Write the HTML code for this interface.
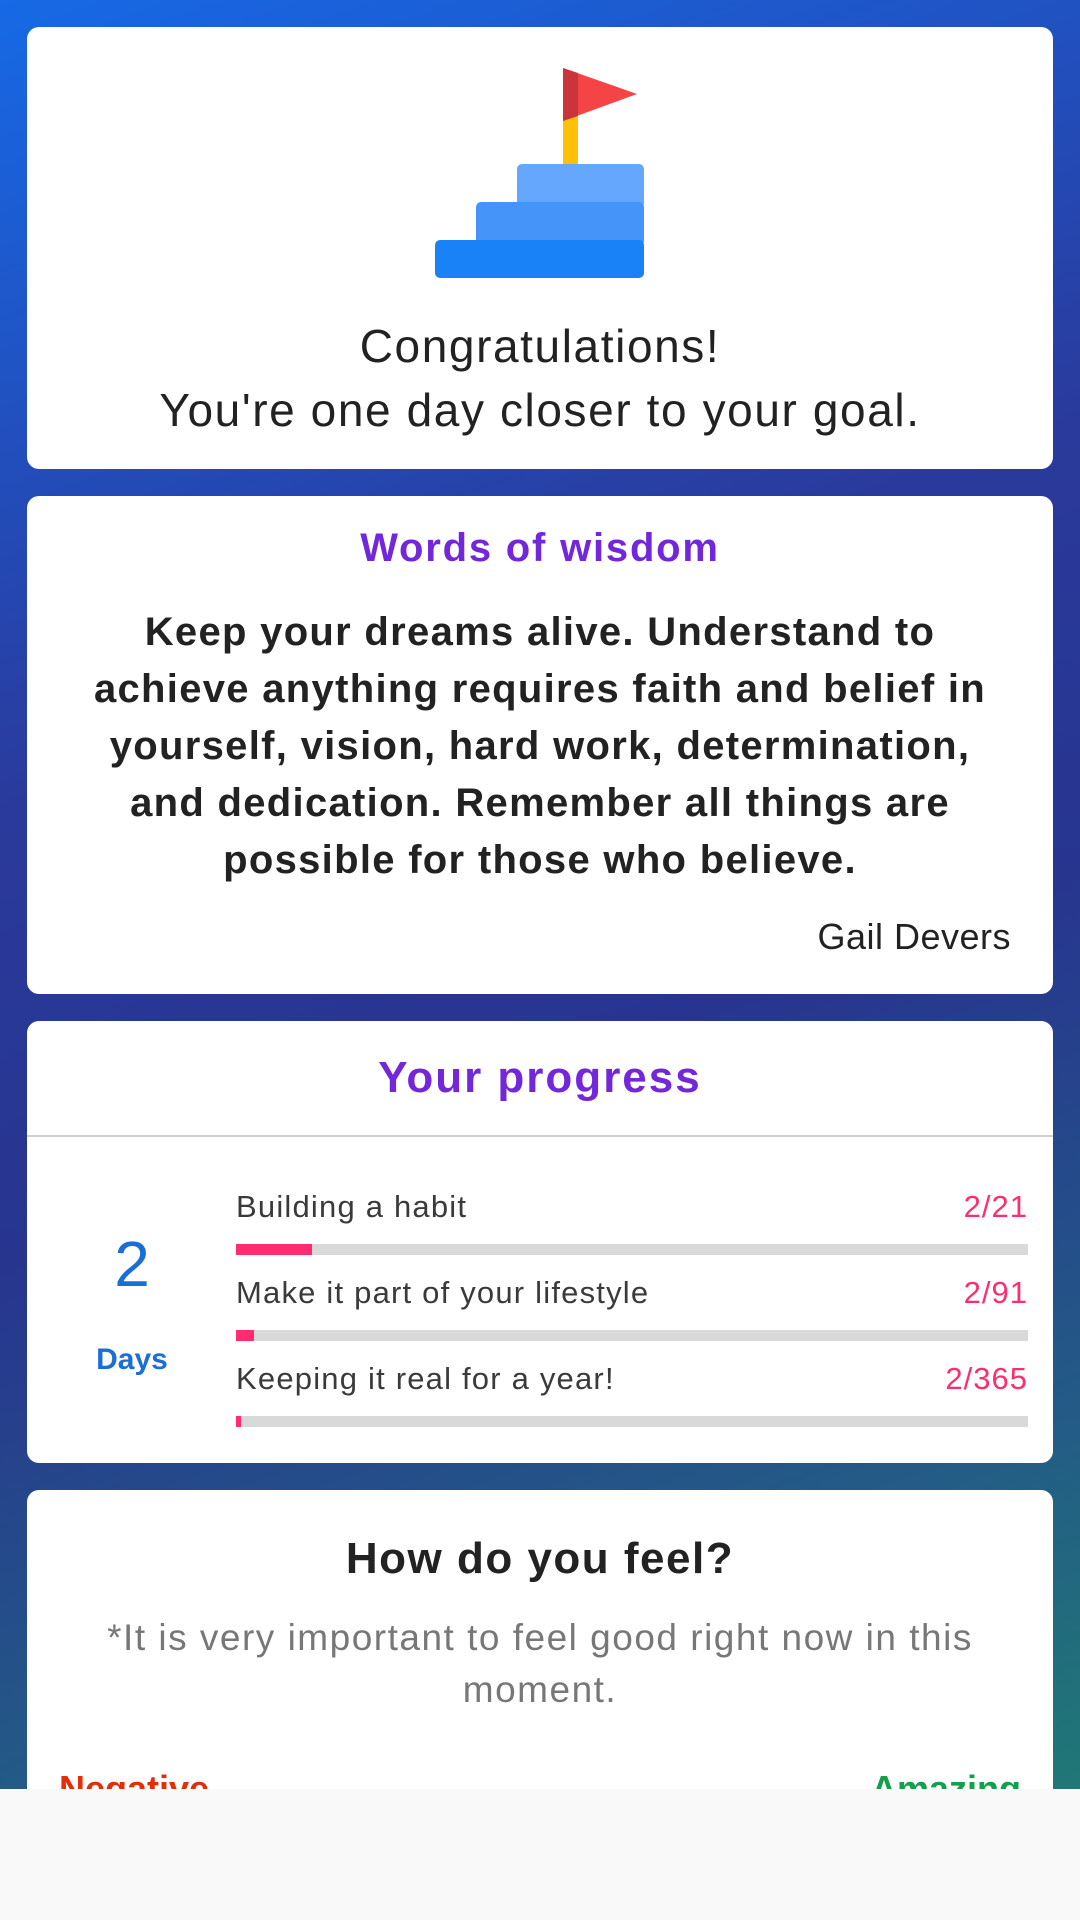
<!DOCTYPE html>
<html><head><meta charset="utf-8"><style>
*{margin:0;padding:0;box-sizing:border-box}
body{width:1080px;height:1920px;overflow:hidden;font-family:"Liberation Sans",sans-serif;position:relative;
background:linear-gradient(160deg,#1769e6 0%,#2a3a9c 35%,#27358f 55%,#235b86 78%,#1f8270 100%);}
.card{position:absolute;left:27px;width:1026px;background:#fff;border-radius:12px;}
.c{text-align:center}
.bar{position:absolute;left:209px;width:792px;height:11px;background:#d9d9d9}
.bar i{display:block;height:100%;background:#ff2d6f}
.lab{position:absolute;left:209px;font-size:31px;color:#3a3a3a;letter-spacing:1.2px}
.num{position:absolute;right:25px;font-size:31px;color:#ff2d6f;letter-spacing:1px}
</style></head><body>
<div class="card" style="top:27px;height:442px">
<svg style="position:absolute;left:408px;top:33px" width="210" height="220" viewBox="0 0 210 220">
<rect x="128" y="30" width="15" height="76" fill="#ffc107"/>
<path d="M128 8 L202 34 L128 61 Z" fill="#f44446"/>
<path d="M128 8 L143 13 L143 56 L128 61 Z" fill="#c9353b"/>
<rect x="82" y="104" width="127" height="44" rx="5" fill="#64a7fc"/>
<rect x="41" y="142" width="168" height="44" rx="5" fill="#4494f9"/>
<rect x="0" y="180" width="209" height="38" rx="5" fill="#1a82f7"/>
</svg>
<div class="c" style="position:absolute;top:287px;width:100%;font-size:46px;line-height:64px;color:#222;letter-spacing:1.6px">Congratulations!<br>You're one day closer to your goal.</div>
</div>
<div class="card" style="top:496px;height:498px">
<div class="c" style="position:absolute;top:30px;width:100%;font-size:40px;font-weight:bold;color:#7327db;letter-spacing:1.8px">Words of wisdom</div>
<div class="c" style="position:absolute;top:108px;left:45px;right:45px;font-size:40px;line-height:57px;font-weight:bold;color:#222;letter-spacing:1.3px">Keep your dreams alive. Understand to achieve anything requires faith and belief in yourself, vision, hard work, determination, and dedication. Remember all things are possible for those who believe.</div>
<div style="position:absolute;top:420px;right:42px;font-size:36px;color:#222;letter-spacing:0.5px">Gail Devers</div>
</div>
<div class="card" style="top:1021px;height:442px">
<div class="c" style="position:absolute;top:32px;width:100%;font-size:44px;font-weight:bold;color:#7327db;letter-spacing:2px">Your progress</div>
<div style="position:absolute;top:114px;left:0;right:0;height:2px;background:#d0d0d0"></div>
<div class="c" style="position:absolute;left:50px;width:110px;top:206px;font-size:64px;color:#1a6fd6">2</div>
<div class="c" style="position:absolute;left:50px;width:110px;top:322px;font-size:30px;font-weight:bold;color:#1a6fd6">Days</div>
<div class="lab" style="top:168px">Building a habit</div><div class="num" style="top:168px">2/21</div>
<div class="bar" style="top:223px"><i style="width:76px"></i></div>
<div class="lab" style="top:254px">Make it part of your lifestyle</div><div class="num" style="top:254px">2/91</div>
<div class="bar" style="top:309px"><i style="width:18px"></i></div>
<div class="lab" style="top:340px">Keeping it real for a year!</div><div class="num" style="top:340px">2/365</div>
<div class="bar" style="top:395px"><i style="width:5px"></i></div>
</div>
<div class="card" style="top:1490px;height:400px">
<div class="c" style="position:absolute;top:44px;width:100%;font-size:44px;font-weight:bold;color:#222;letter-spacing:1.5px">How do you feel?</div>
<div class="c" style="position:absolute;top:122px;left:55px;right:55px;font-size:37px;line-height:52px;color:#777;letter-spacing:1.5px">*It is very important to feel good right now in this moment.</div>
<div style="position:absolute;top:278px;left:32px;font-size:36px;font-weight:bold;color:#e0300a">Negative</div>
<div style="position:absolute;top:278px;right:32px;font-size:36px;font-weight:bold;color:#14a04a">Amazing</div>
</div>
<div style="position:absolute;left:0;top:1789px;width:1080px;height:131px;background:#f9f9f9"></div>
</body></html>
